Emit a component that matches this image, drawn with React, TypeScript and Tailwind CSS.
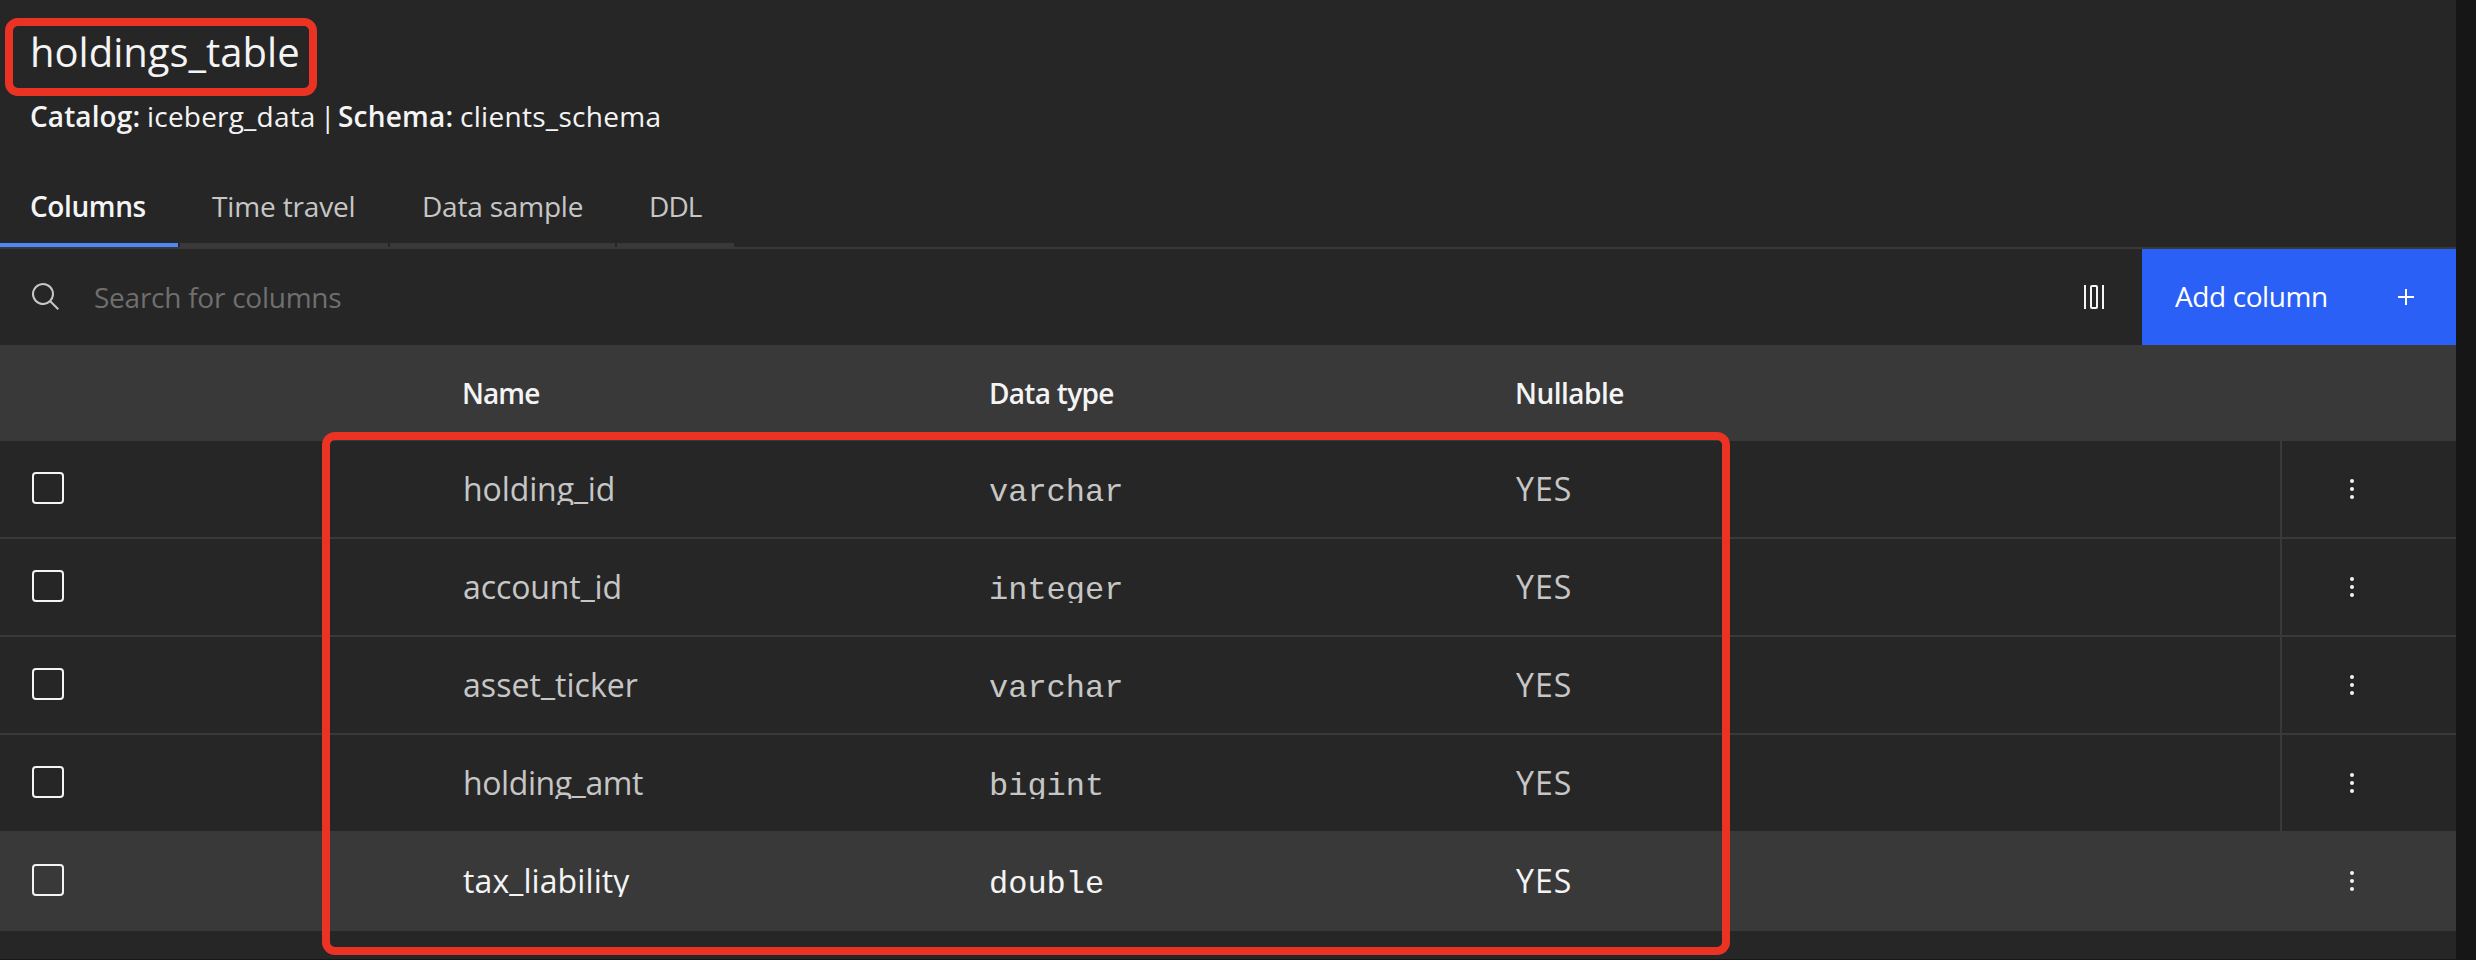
import { Fragment } from "react";
import clsx from "clsx";

type Row = {
  name: string;
  nameTracking: string;
  type: string;
  nullable: string;
  hovered?: boolean;
};

const rows: Row[] = [
  { name: "holding_id", nameTracking: "tracking-[-0.1px]", type: "varchar", nullable: "YES" },
  { name: "account_id", nameTracking: "tracking-[-0.1px]", type: "integer", nullable: "YES" },
  { name: "asset_ticker", nameTracking: "tracking-[0.05px]", type: "varchar", nullable: "YES" },
  { name: "holding_amt", nameTracking: "tracking-[-0.4px]", type: "bigint", nullable: "YES" },
  { name: "tax_liability", nameTracking: "tracking-[0.1px]", type: "double", nullable: "YES", hovered: true },
];

const tabs = [
  { label: "Columns", width: "w-[178px]", tracking: "tracking-[-0.4px]", active: true },
  { label: "Time travel", width: "w-[208px]", tracking: "tracking-[-0.15px]" },
  { label: "Data sample", width: "w-[225px]", tracking: "tracking-[-0.2px]" },
  { label: "DDL", width: "w-[117px]", tracking: "tracking-[-0.9px]" },
];

const gridCols = "grid grid-cols-[463px_526px_525px_766px_176px]";

function SearchIcon() {
  return (
    <svg viewBox="0 0 32 32" className="size-8 shrink-0 fill-[#c6c6c6]">
      <path d="M29,27.5859l-7.5521-7.5521a11.0177,11.0177,0,1,0-1.4141,1.4141L27.5859,29ZM4,13a9,9,0,1,1,9,9A9.01,9.01,0,0,1,4,13Z" />
    </svg>
  );
}

function ColumnIcon() {
  return (
    <svg viewBox="0 0 32 32" className="size-8 shrink-0 fill-[#f4f4f4]">
      <path d="M24 4H26V28H24zM6 4H8V28H6z" />
      <path d="M18,6V26H14V6h4m0-2H14a2,2,0,0,0-2,2V26a2,2,0,0,0,2,2h4a2,2,0,0,0,2-2V6a2,2,0,0,0-2-2Z" />
    </svg>
  );
}

function AddIcon() {
  return (
    <svg viewBox="0 0 32 32" className="size-8 shrink-0 fill-white">
      <path d="M17 15V8H15V15H8V17H15V24H17V17H24V15z" />
    </svg>
  );
}

function OverflowIcon() {
  return (
    <svg viewBox="0 0 32 32" className="size-8 fill-[#f4f4f4]">
      <circle cx="16" cy="8" r="2" />
      <circle cx="16" cy="16" r="2" />
      <circle cx="16" cy="24" r="2" />
    </svg>
  );
}

/* Keeps underscores inside the clipped text box of a table cell. */
function Identifier({ text }: { text: string }) {
  return (
    <>
      {text.split("_").map((part, i) => (
        <Fragment key={i}>
          {i > 0 && <span className="relative -top-0.5">_</span>}
          {part}
        </Fragment>
      ))}
    </>
  );
}

export default function App() {
  return (
    <div className="flex h-[960px] w-[2476px] overflow-hidden bg-[#161616] font-['Open_Sans',sans-serif] text-[28px] leading-10 text-[#f4f4f4]">
      <main className="relative h-[959px] w-[2456px] bg-[#262626]">
        <header className="h-[151px] pt-6 pl-[30px]">
          <h1 className="text-[40px] leading-[56px]">holdings_table</h1>
          <p className="mt-4 flex whitespace-pre">
            <strong className="w-[117px] font-semibold tracking-[0.1px]">Catalog:</strong>
            <span className="w-[173px] tracking-[0.2px]">iceberg_data</span>
            <span className="w-[18px]">|</span>
            <strong className="w-[122px] font-semibold tracking-[0.2px]">Schema:</strong>
            <span className="tracking-[0.3px]">clients_schema</span>
          </p>
        </header>

        <nav className="flex h-[98px] gap-0.5 border-b-2 border-[#393939]">
          {tabs.map((t) => (
            <div
              key={t.label}
              className={clsx(
                "border-b-4 pt-[35px] whitespace-nowrap",
                t.width,
                t.tracking,
                t.active
                  ? "border-[#4f87f6] pl-[30px] font-semibold"
                  : "border-[#393939] pl-8 text-[#c6c6c6]",
              )}
            >
              {t.label}
            </div>
          ))}
        </nav>

        <div className="flex h-24 items-center pl-[30px]">
          <SearchIcon />
          <span className="ml-8 flex-1 tracking-[-0.25px] text-[#6f6f6f]">Search for columns</span>
          <ColumnIcon />
          <button className="ml-8 flex h-24 w-[314px] items-center justify-between bg-[#2b60f6] pr-[34px] pl-[33px] tracking-[-0.4px] text-white">
            <span className="-mt-0.5">Add column</span>
            <AddIcon />
          </button>
        </div>

        <div className={clsx(gridCols, "h-24 items-center bg-[#393939] font-semibold")}>
          <span className="col-start-2 -ml-px tracking-[-0.9px]">Name</span>
          <span className="tracking-[-0.7px]">Data type</span>
          <span className="pl-px tracking-[-0.5px]">Nullable</span>
        </div>

        {rows.map((r) => (
          <div
            key={r.name}
            className={clsx(
              gridCols,
              "h-[98px] border-b-2 border-[#393939] text-[32px]",
              r.hovered ? "bg-[#393939] text-[#f4f4f4]" : "text-[#c6c6c6]",
            )}
          >
            <div className="pt-[31px] pl-8">
              <div className="size-8 rounded-[4px] border-2 border-[#f4f4f4]" />
            </div>
            <div className={clsx("mt-7 h-9 overflow-hidden", r.nameTracking)}>
              <Identifier text={r.name} />
            </div>
            <div className="mt-7 h-9 overflow-hidden pt-1 font-['Liberation_Mono',monospace]">
              {r.type}
            </div>
            <div className="mt-7 h-9 overflow-hidden pl-0.5 tracking-[1px]">{r.nullable}</div>
            <div className="flex items-center border-l-2 border-[#393939] pl-[54px]">
              <OverflowIcon />
            </div>
          </div>
        ))}

        <div className="absolute top-[18px] left-[5px] h-[78px] w-[312px] rounded-[13px] border-8 border-[#eb3323]" />
        <div className="absolute top-[432px] left-[322px] h-[523px] w-[1408px] rounded-[13px] border-8 border-[#eb3323]" />
      </main>
    </div>
  );
}
